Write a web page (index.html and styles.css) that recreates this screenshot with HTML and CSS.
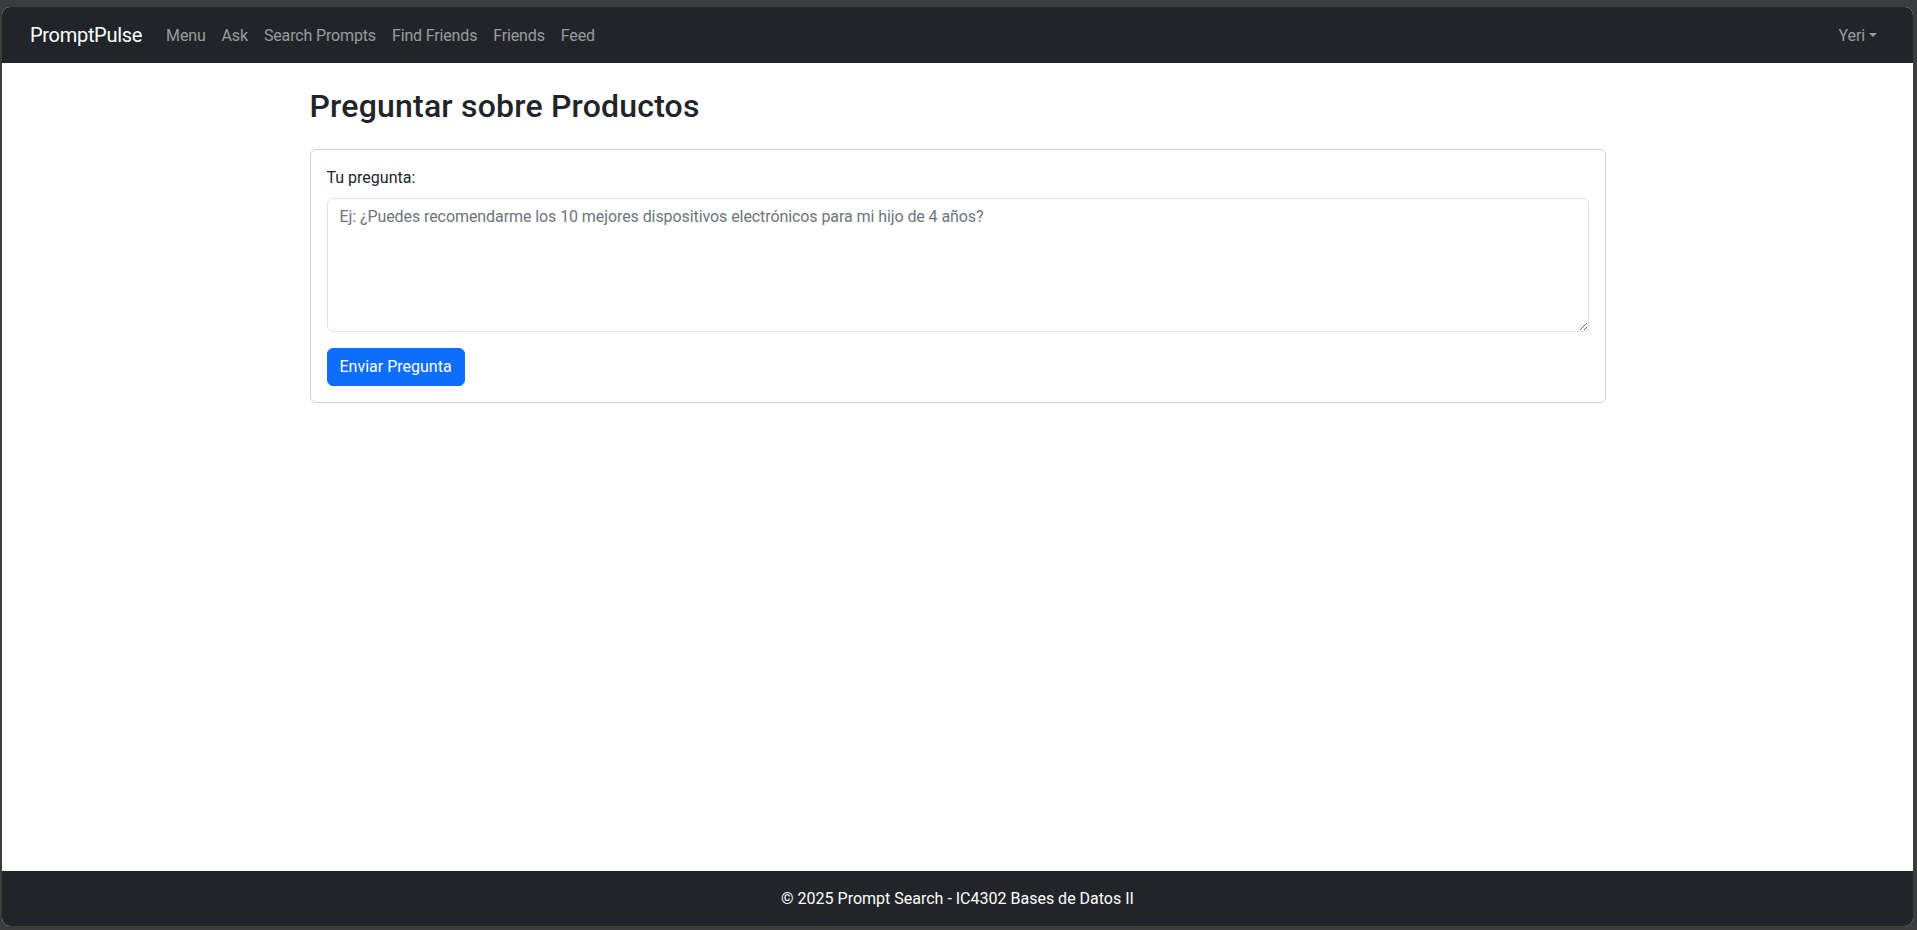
FILE: index.html
```html
<!DOCTYPE html>
<html lang="es">
<head>
<meta charset="utf-8">
<title>PromptPulse - Preguntar</title>
<link rel="stylesheet" href="styles.css">
</head>
<body>
<div class="window">
  <nav class="navbar">
    <div class="nav-inner">
      <a class="brand" href="#">PromptPulse</a>
      <ul class="nav-links">
        <li><a class="nav-link" href="#">Menu</a></li>
        <li><a class="nav-link" href="#">Ask</a></li>
        <li><a class="nav-link" href="#">Search Prompts</a></li>
        <li><a class="nav-link" href="#">Find Friends</a></li>
        <li><a class="nav-link" href="#">Friends</a></li>
        <li><a class="nav-link" href="#">Feed</a></li>
      </ul>
      <a class="nav-link user-toggle" href="#">Yeri</a>
    </div>
  </nav>

  <main class="container">
    <h2 class="page-title">Preguntar sobre Productos</h2>
    <div class="card">
      <form class="card-body">
        <label class="form-label" for="q">Tu pregunta:</label>
        <textarea id="q" class="form-control" rows="5" placeholder="Ej: ¿Puedes recomendarme los 10 mejores dispositivos electrónicos para mi hijo de 4 años?"></textarea>
        <button type="button" class="btn-primary">Enviar Pregunta</button>
      </form>
    </div>
  </main>

  <footer class="footer">© 2025 Prompt Search - IC4302 Bases de Datos II</footer>
</div>
</body>
</html>
```

FILE: styles.css
```css
* { box-sizing: border-box; }

html, body {
  margin: 0;
  height: 100%;
}

body {
  background: #3c3c3c;
  font-family: Roboto, "Liberation Sans", sans-serif;
  font-size: 16px;
  line-height: 1.5;
  color: #212529;
  padding: 7px 4px 4px 2px;
}

.window {
  height: 100%;
  background: #fff;
  border-radius: 8px;
  overflow: hidden;
  display: flex;
  flex-direction: column;
}

a { text-decoration: none; }

.navbar {
  background: #212529;
  padding: 8px 16px;
  flex: 0 0 auto;
}

.nav-inner {
  display: flex;
  align-items: center;
  padding: 0 12px;
}

.brand {
  color: #fff;
  font-size: 20px;
  line-height: 30px;
  padding: 5px 0;
  margin-right: 16px;
  letter-spacing: -0.3px;
}

.nav-links {
  display: flex;
  list-style: none;
  margin: 0;
  padding: 0;
  flex: 1 1 auto;
}

.nav-link {
  display: block;
  color: rgba(255, 255, 255, 0.55);
  padding: 9px 8px 7px;
  line-height: 24px;
  letter-spacing: -0.15px;
}

.user-toggle::after {
  content: "";
  display: inline-block;
  margin-left: 0.255em;
  vertical-align: 0.255em;
  border-top: 0.3em solid;
  border-left: 0.3em solid transparent;
  border-right: 0.3em solid transparent;
}

.container {
  width: 1320px;
  margin: 24px auto 0;
  padding: 0 12px;
  flex: 1 0 auto;
}

.page-title {
  margin: 0 0 24px;
  font-size: 32px;
  font-weight: 500;
  line-height: 1.2;
  letter-spacing: 0.2px;
}

.card {
  border: 1px solid rgba(0, 0, 0, 0.175);
  border-radius: 6px;
}

.card-body {
  padding: 16px;
  display: flex;
  flex-direction: column;
  align-items: flex-start;
  margin: 0;
}

.form-label {
  margin-bottom: 8px;
}

.form-control {
  display: block;
  width: 100%;
  height: 134px;
  padding: 6px 12px;
  font-family: inherit;
  font-size: 16px;
  line-height: 1.5;
  color: #212529;
  border: 1px solid #dee2e6;
  border-radius: 6px;
  margin-bottom: 16px;
  resize: vertical;
  letter-spacing: -0.08px;
}

.form-control::placeholder {
  color: #6c757d;
  opacity: 1;
}

.btn-primary {
  font-family: inherit;
  font-size: 16px;
  line-height: 24px;
  padding: 6px 12px;
  background: #0d6efd;
  color: #fff;
  border: 1px solid #0d6efd;
  border-radius: 6px;
}

.footer {
  flex: 0 0 auto;
  background: #212529;
  color: #fff;
  text-align: center;
  padding: 16px 0 15px;
  line-height: 24px;
}
```
